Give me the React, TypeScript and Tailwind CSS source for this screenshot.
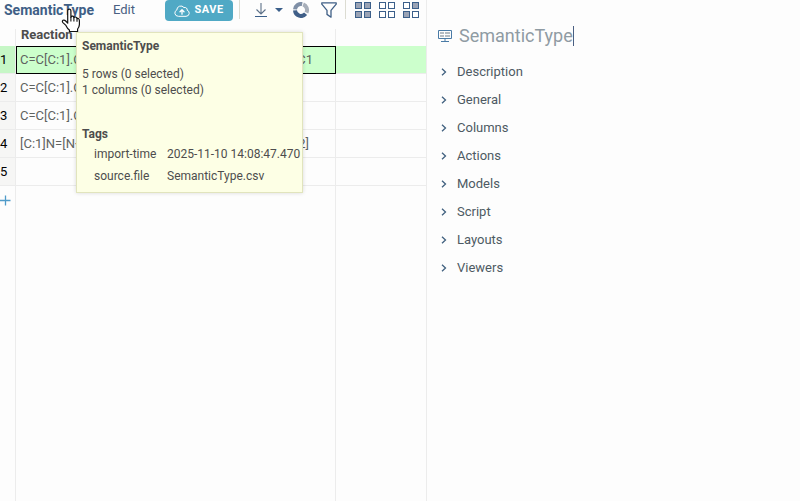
import { useState } from "react";

type Row = { id: number; start: string; end: string };

const ROWS: Row[] = [
  { id: 1, start: "C=C[C:1].C", end: "CC1" },
  { id: 2, start: "C=C[C:1].C", end: "" },
  { id: 3, start: "C=C[C:1].C", end: "" },
  { id: 4, start: "[C:1]N=[N+", end: "2]" },
  { id: 5, start: "", end: "" },
];

const PANES = [
  "Description",
  "General",
  "Columns",
  "Actions",
  "Models",
  "Script",
  "Layouts",
  "Viewers",
];

const SQUARES = [
  [0.5, 0.5],
  [9.5, 0.5],
  [0.5, 9.5],
  [9.5, 9.5],
];

function SelectionIcon({ filled }: { filled: boolean[] }) {
  return (
    <svg width="16" height="16" viewBox="0 0 16 16" aria-hidden="true">
      {SQUARES.map(([x, y], i) => (
        <rect
          key={i}
          x={x}
          y={y}
          width="6"
          height="6"
          fill={filled[i] ? "#9aa3b5" : "#fff"}
          stroke="#3b5f8a"
        />
      ))}
    </svg>
  );
}

function CloudIcon() {
  return (
    <svg
      width="16"
      height="12"
      viewBox="0 0 16 12"
      fill="none"
      stroke="#fff"
      strokeLinecap="round"
      strokeLinejoin="round"
      aria-hidden="true"
    >
      <path d="M4 11.3a3.3 3.3 0 0 1-1.2-6.3A4 4 0 0 1 10 2.6a2.4 2.4 0 0 1 3.2 2.7 3.1 3.1 0 0 1-.8 6z" />
      <path d="M8 9.2V5M6 6.8l2-2 2 2" strokeWidth="1.3" />
    </svg>
  );
}

function DownloadIcon() {
  return (
    <svg width="14" height="16" viewBox="0 0 14 16" fill="none" aria-hidden="true">
      <path d="M7 1v11M2.5 7.5 7 12l4.5-4.5" stroke="#5d7189" strokeWidth="1.1" />
      <path d="M1 14.5h12" stroke="#3b5f8a" />
    </svg>
  );
}

function RingIcon() {
  return (
    <svg width="16" height="16" viewBox="0 0 16 16" fill="none" strokeWidth="4" aria-hidden="true">
      <path d="M2 7.4A6 6 0 0 1 9.2 2.1" stroke="#7f8fa6" />
      <path d="M10.2 2.4A6 6 0 0 1 13.4 10.6" stroke="#a7aeb9" />
      <path d="M2 8.4A6 6 0 0 0 12.6 11.8" stroke="#405f88" />
    </svg>
  );
}

function FilterIcon() {
  return (
    <svg
      width="16"
      height="16"
      viewBox="0 0 16 16"
      fill="none"
      stroke="#3f5f86"
      strokeWidth="1.3"
      strokeLinejoin="round"
      aria-hidden="true"
    >
      <path d="M.8.8h14.4v1.4L10 8.4v6.8l-4-2.8v-4L.8 2.2z" />
    </svg>
  );
}

function TableIcon() {
  return (
    <svg width="14" height="12" viewBox="0 0 14 12" fill="none" stroke="#4a7ba6" aria-hidden="true">
      <path d="M.5.5h13v8h-13z" />
      <path d="M2 3h4M7 3h5M2 6h4M7 6h5" stroke="#b4bcc2" strokeWidth="2" />
      <path d="M7 9v2M3 11.5h8" />
    </svg>
  );
}

function HandCursor() {
  return (
    <svg
      className="pointer-events-none absolute left-[61px] top-2 z-20"
      width="20"
      height="25"
      viewBox="0 0 20 25"
      aria-hidden="true"
    >
      <path
        d="M6.7 15.2V3Q6.7 1.2 8.3 1.2T9.9 3v6.2Q10.3 8 11.6 8.2 12.8 8.4 12.9 9.6 14 8.6 15.2 9.3q.8.4.8 1.3 1.5-.7 2.2.9.3.6.2 5.1-.1 2.2-1.8 4.4V23.5H8.4V22Q6.4 20.6 4.9 17.4L1.9 14.6Q.8 13.2 2 12.3q1.3-.7 2.7.7z"
        fill="#fff"
        stroke="#111"
        strokeWidth="1.2"
        strokeLinejoin="round"
      />
      <path d="M9.9 9v4.5M12.9 9.6v4M16 10.6v3.2" stroke="#111" strokeWidth="1.1" />
    </svg>
  );
}

function Toolbar() {
  return (
    <header className="flex h-[29px] items-start overflow-hidden text-[#4a5f82]">
      <button className="ml-1 h-5 text-[14px] font-bold leading-5 text-[#3f5f86]">SemanticType</button>
      <button className="ml-[19px] h-5 text-[13px] leading-5">Edit</button>
      <button className="ml-[30px] flex h-[21px] w-[68px] items-center justify-center gap-1 rounded bg-[#50a9c5] text-[11px] font-bold text-white">
        <CloudIcon />
        <span className="tracking-wider">SAVE</span>
      </button>
      <div className="ml-1.5 h-[19px] w-px bg-[#dcdcd2]" />
      <div className="ml-3.5 flex items-center pt-0.5">
        <button aria-label="Download" className="h-4">
          <DownloadIcon />
        </button>
        <button aria-label="Download options" className="ml-[7px]">
          <svg width="8" height="4" viewBox="0 0 8 4" aria-hidden="true">
            <path d="M0 0h8L4 4z" fill="#3b5f8a" />
          </svg>
        </button>
        <button aria-label="Statistics" className="ml-2.5 h-4">
          <RingIcon />
        </button>
        <button aria-label="Filter" className="ml-3 h-4">
          <FilterIcon />
        </button>
      </div>
      <div className="ml-2 h-[19px] w-px bg-[#dcdcd2]" />
      <div className="ml-[9px] flex gap-2 pt-0.5">
        <button aria-label="Select all" className="h-4">
          <SelectionIcon filled={[true, true, true, true]} />
        </button>
        <button aria-label="Select none" className="h-4">
          <SelectionIcon filled={[false, false, false, false]} />
        </button>
        <button aria-label="Invert selection" className="h-4">
          <SelectionIcon filled={[false, true, true, false]} />
        </button>
      </div>
    </header>
  );
}

function Grid() {
  return (
    <table className="h-full w-full table-fixed border-separate border-spacing-0 text-[13px] text-[#60635f]">
      <colgroup>
        <col className="w-4" />
        <col className="w-80" />
        <col />
      </colgroup>
      <thead>
        <tr className="h-[17px]">
          <th className="border-r border-[#ececec] p-0" />
          <th className="border-r border-[#ececec] p-0 pl-[5px] text-left align-top font-bold leading-3 text-[#4d4d4d]">
            Reaction
          </th>
          <th className="p-0" />
        </tr>
      </thead>
      <tbody>
        {ROWS.map((row) => {
          const current = row.id === 1;
          return (
            <tr key={row.id} className={`h-7 ${current ? "bg-[#ccffcc]" : ""}`}>
              <th
                className={`border-b border-r border-[#ececec] p-0 text-left font-normal text-black ${
                  current ? "bg-[#c6f7c6]" : "bg-[#f6f6f5]"
                }`}
              >
                {row.id}
              </th>
              <td
                className={`border-b border-r border-[#ececec] p-0 pl-1 ${
                  current ? "outline-1 -outline-offset-1 outline-black" : ""
                }`}
              >
                <div className={`flex justify-between ${row.id === 4 ? "pr-[26px]" : "pr-[22px]"}`}>
                  <span>{row.start}</span>
                  <span>{row.end}</span>
                </div>
              </td>
              <td className="border-b border-[#ececec] p-0" />
            </tr>
          );
        })}
        <tr>
          <td className="border-r border-[#ececec] p-0 align-top">
            <button aria-label="Add row" className="flex h-7 items-center">
              <svg width="11" height="11" viewBox="0 0 11 11" aria-hidden="true">
                <path d="M0 5.5h10.5M5.5.5v10" stroke="#4f9bc9" strokeWidth="1.3" />
              </svg>
            </button>
          </td>
          <td className="border-r border-[#ececec] p-0" />
          <td className="p-0" />
        </tr>
      </tbody>
    </table>
  );
}

function Tooltip() {
  return (
    <div
      role="tooltip"
      className="absolute left-[76px] top-8 z-10 h-[161px] w-[227px] border border-[#e1e4bd] bg-[#fdffe5] px-[5px] pt-[5px] text-[12px] leading-4 text-[#4d4d4d] shadow-[0_0_4px_rgba(0,0,0,0.15)]"
    >
      <div className="font-bold">SemanticType</div>
      <div className="mt-3">5 rows (0 selected)</div>
      <div>1 columns (0 selected)</div>
      <div className="mt-7 font-bold">Tags</div>
      <dl className="grid grid-cols-[73px_1fr] whitespace-nowrap pl-3 pt-px leading-[22px]">
        <dt>import-time</dt>
        <dd>2025-11-10 14:08:47.470</dd>
        <dt>source.file</dt>
        <dd>SemanticType.csv</dd>
      </dl>
    </div>
  );
}

function ContextPanel() {
  const [name, setName] = useState("SemanticType");
  const [open, setOpen] = useState<string | null>(null);

  return (
    <aside className="pl-[11px] pt-6">
      <div className="flex h-6 items-center gap-[7px]">
        <TableIcon />
        <input
          aria-label="Table name"
          value={name}
          onChange={(e) => setName(e.target.value)}
          className="field-sizing-content h-5 border-r border-[#4a5f82] p-0 pb-0.5 text-[18px] leading-[18px] text-[#8f9ba3] outline-none"
        />
      </div>
      <div className="mt-2.5">
        {PANES.map((pane) => (
          <button
            key={pane}
            aria-expanded={open === pane}
            onClick={() => setOpen(open === pane ? null : pane)}
            className="flex h-7 w-full items-center gap-2.5 pl-[3px] text-[13px] text-[#4d5a63]"
          >
            <svg width="6" height="8" viewBox="0 0 6 8" fill="none" aria-hidden="true">
              <path d="M1 .7 4.5 4 1 7.3" stroke="#40607f" strokeWidth="1.3" />
            </svg>
            {pane}
          </button>
        ))}
      </div>
    </aside>
  );
}

export default function App() {
  return (
    <div className="relative grid min-h-screen grid-cols-[427fr_373fr] bg-[#fdfdfd] font-[Roboto,sans-serif]">
      <main className="grid grid-rows-[29px_1fr] border-r border-[#ececec]">
        <Toolbar />
        <Grid />
      </main>
      <ContextPanel />
      <Tooltip />
      <HandCursor />
    </div>
  );
}
